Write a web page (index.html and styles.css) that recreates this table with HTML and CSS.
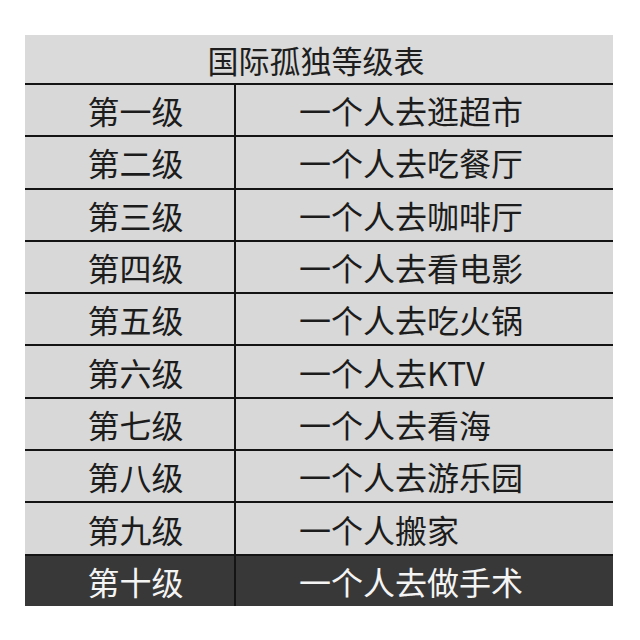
FILE: index.html
```html
<!DOCTYPE html>
<html lang="zh-CN">
<head>
<meta charset="utf-8">
<title>国际孤独等级表</title>
<link rel="stylesheet" href="styles.css">
</head>
<body>
<div class="table">
  <div class="head">国际孤独等级表</div>
  <div class="cell lvl">第一级</div><div class="cell act">一个人去逛超市</div>
  <div class="cell lvl">第二级</div><div class="cell act">一个人去吃餐厅</div>
  <div class="cell lvl">第三级</div><div class="cell act">一个人去咖啡厅</div>
  <div class="cell lvl">第四级</div><div class="cell act">一个人去看电影</div>
  <div class="cell lvl">第五级</div><div class="cell act">一个人去吃火锅</div>
  <div class="cell lvl">第六级</div><div class="cell act">一个人去KTV</div>
  <div class="cell lvl">第七级</div><div class="cell act">一个人去看海</div>
  <div class="cell lvl">第八级</div><div class="cell act">一个人去游乐园</div>
  <div class="cell lvl">第九级</div><div class="cell act">一个人搬家</div>
  <div class="cell lvl dark">第十级</div><div class="cell act dark">一个人去做手术</div>
</div>
</body>
</html>
```
FILE: styles.css
```css
html, body {
  margin: 0;
  padding: 0;
  background: #ffffff;
}
body {
  width: 640px;
  height: 640px;
  padding: 35px 0 0 25px;
  box-sizing: border-box;
  font-family: "Noto Sans CJK SC", "Noto Sans", sans-serif;
}
.table {
  width: 588px;
  height: 571px;
  display: grid;
  grid-template-columns: 209px 1fr;
  grid-template-rows: 48px repeat(10, 1fr);
  gap: 2px;
  background: #141414;
}
.head {
  grid-column: 1 / 3;
  background: #dadada;
  color: #1e1e1e;
  font-size: 31px;
  display: flex;
  align-items: center;
  justify-content: center;
  padding-right: 6px;
  line-height: 1;
}
.cell {
  background: #d8d8d8;
  color: #1c1c1c;
  font-size: 32px;
  line-height: 1;
  display: flex;
  align-items: center;
}
.lvl {
  justify-content: center;
  padding-left: 12px;
}
.act {
  padding-left: 63px;
}
.cell.dark {
  background: #383838;
  color: #f4f4f4;
}
```
